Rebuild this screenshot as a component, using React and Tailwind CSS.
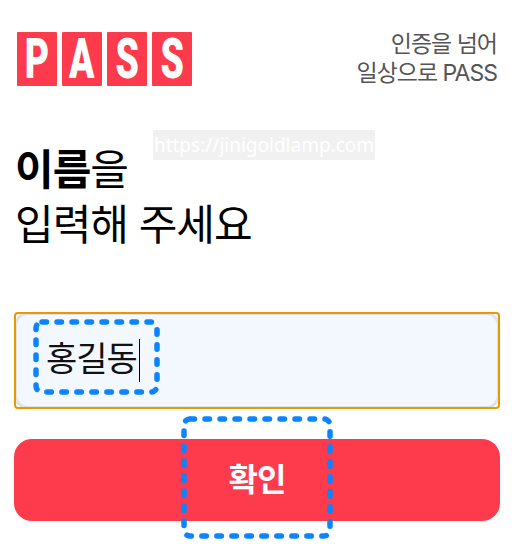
import React from 'react';

const FONT = "font-['Inter','Noto_Sans_CJK_KR',sans-serif]";

// Dashed annotation frame that sits over the form
const DashedFrame = ({ className, width, height }) => (
  <svg className={`absolute ${className}`} width={width} height={height} fill="none">
    <rect
      x="3"
      y="3"
      width={width - 6}
      height={height - 6}
      rx="6"
      stroke="#0a84ff"
      strokeWidth="5.5"
      strokeLinecap="round"
      strokeDasharray="4.5 10.5"
    />
  </svg>
);

const LogoTile = ({ letter }) => (
  <div className="flex h-[54px] w-[40px] items-center justify-center rounded-[1px] bg-[#fe3a4d]">
    <span className="font-['Roboto',sans-serif] text-[55px] leading-none font-black text-white scale-x-[0.68]">
      {letter}
    </span>
  </div>
);

export default function App() {
  return (
    <div className={`relative h-[551px] w-[514px] overflow-hidden bg-white ${FONT}`}>
      {/* Header */}
      <div className="flex items-start justify-between pt-[32px] pr-[17px] pl-[17px]">
        <div className="flex gap-[5px]">
          <LogoTile letter="P" />
          <LogoTile letter="A" />
          <LogoTile letter="S" />
          <LogoTile letter="S" />
        </div>
        <div className="-mt-[2px] text-right text-[23px] leading-[29px] tracking-[-1px] text-[#555555]">
          <p>인증을 넘어</p>
          <p>일상으로 PASS</p>
        </div>
      </div>

      {/* Watermark */}
      <div className="absolute top-[130px] left-[153px] flex h-[30px] w-[222px] items-center justify-center bg-[#f1f1f1] font-['Noto_Sans',sans-serif] text-[19px] text-white">
        https://jinigoldlamp.com
      </div>

      {/* Title */}
      <div className="mt-[54px] pl-[15px] text-[42px] leading-[55px] tracking-[-1px] text-black">
        <p>
          <span className="font-bold">이름</span>을
        </p>
        <p>입력해 주세요</p>
      </div>

      {/* Input */}
      <div className="relative mx-[14px] mt-[60px] h-[97px]">
        <div className="flex h-full items-center rounded-[14px] border-[3px] border-[#dfe3e8] bg-[#f3f7fe] pl-[29px]">
          <span className="-mt-[3px] text-[34px] leading-none tracking-[-1px] text-[#111111]">홍길동</span>
          <span className="ml-[2px] h-[43px] w-px bg-black" />
        </div>
        <div className="absolute inset-0 rounded-[4px] border-[2.5px] border-[#e59a00]" />
      </div>

      {/* Confirm */}
      <div className="mx-[14px] mt-[30px] flex h-[82px] items-center justify-center rounded-[18px] bg-[#fe3a4d] text-[32px] font-bold tracking-[-1px] text-white">
        확인
      </div>

      <DashedFrame className="top-[319px] left-[33px]" width={127} height={76} />
      <DashedFrame className="top-[416px] left-[181px]" width={152} height={123} />
    </div>
  );
}
